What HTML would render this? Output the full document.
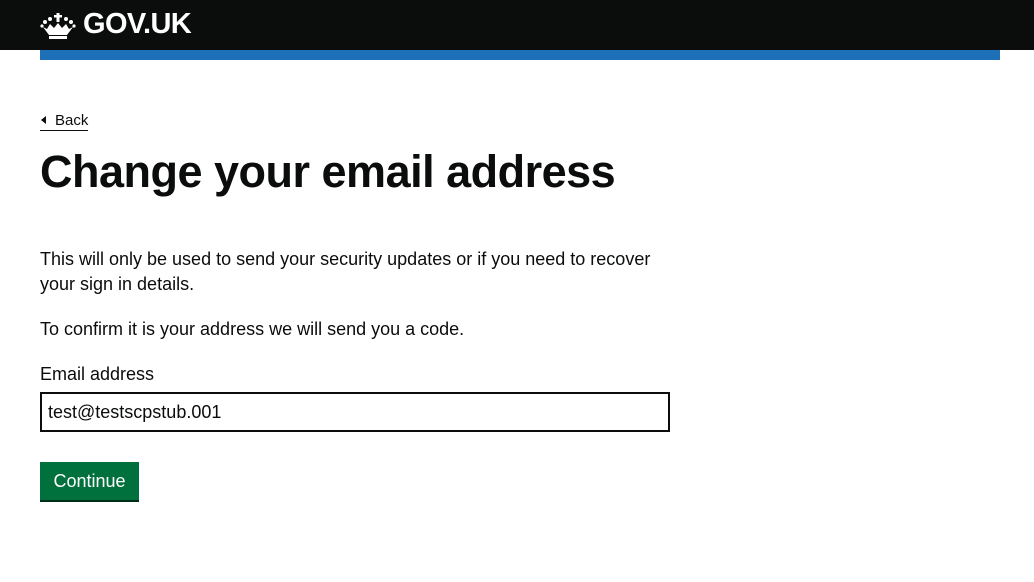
<!DOCTYPE html>
<html><head><style>
body{margin:0;background:#fff;font-family:"Liberation Sans",sans-serif;color:#0b0c0c;}
.hd{height:50px;background:#0b0c0c;position:relative}
.logo{position:absolute;left:40px;top:8px;color:#fff;font-weight:bold;font-size:29px;letter-spacing:-0.6px;display:flex;align-items:center}
.bar{position:absolute;left:40px;top:50px;width:960px;height:10px;background:#1d70b8}
.back{position:absolute;left:40px;top:111px;font-size:15px;color:#0b0c0c;text-decoration:none;border-bottom:1px solid #0b0c0c;padding-left:15px;line-height:19px}
.back:before{content:"";position:absolute;left:1px;top:5px;border-right:5px solid #0b0c0c;border-top:4px solid transparent;border-bottom:4px solid transparent}
h1{position:absolute;left:40px;top:144px;margin:0;font-size:45px;line-height:56px;font-weight:bold;letter-spacing:-0.5px}
p{position:absolute;left:40px;margin:0;font-size:18px;line-height:25px;width:640px}
.in{position:absolute;left:40px;top:392px;width:620px;height:36px;border:2px solid #0b0c0c;font-size:18px;line-height:36px;padding-left:6px;box-sizing:content-box}
.btn{position:absolute;left:40px;top:462px;width:99px;height:38px;background:#00703c;box-shadow:0 2px 0 #002d18;color:#fff;font-size:18px;line-height:38px;text-align:center}
</style></head><body>
<div class="hd"><div class="logo"><svg width="36" height="30" viewBox="0 0 36 30" style="margin-right:7px"><g fill="#fff"><rect x="16.5" y="3" width="3" height="9"/><rect x="14" y="5" width="8" height="2.5"/><circle cx="5" cy="12" r="2"/><circle cx="31" cy="12" r="2"/><circle cx="10" cy="9" r="2"/><circle cx="26" cy="9" r="2"/><circle cx="2" cy="16" r="1.6"/><circle cx="34" cy="16" r="1.6"/><path d="M3 17 L9 25 L27 25 L33 17 L29 19 L26 14 L22 18 L18 13 L14 18 L10 14 L7 19 Z"/><rect x="9" y="26" width="18" height="3"/></g></svg>GOV.UK</div></div>
<div class="bar"></div>
<a class="back">Back</a>
<h1>Change your email address</h1>
<p style="top:247px">This will only be used to send your security updates or if you need to recover your sign in details.</p>
<p style="top:317px">To confirm it is your address we will send you a code.</p>
<p style="top:362px">Email address</p>
<div class="in">test@testscpstub.001</div>
<div class="btn">Continue</div>
</body></html>
